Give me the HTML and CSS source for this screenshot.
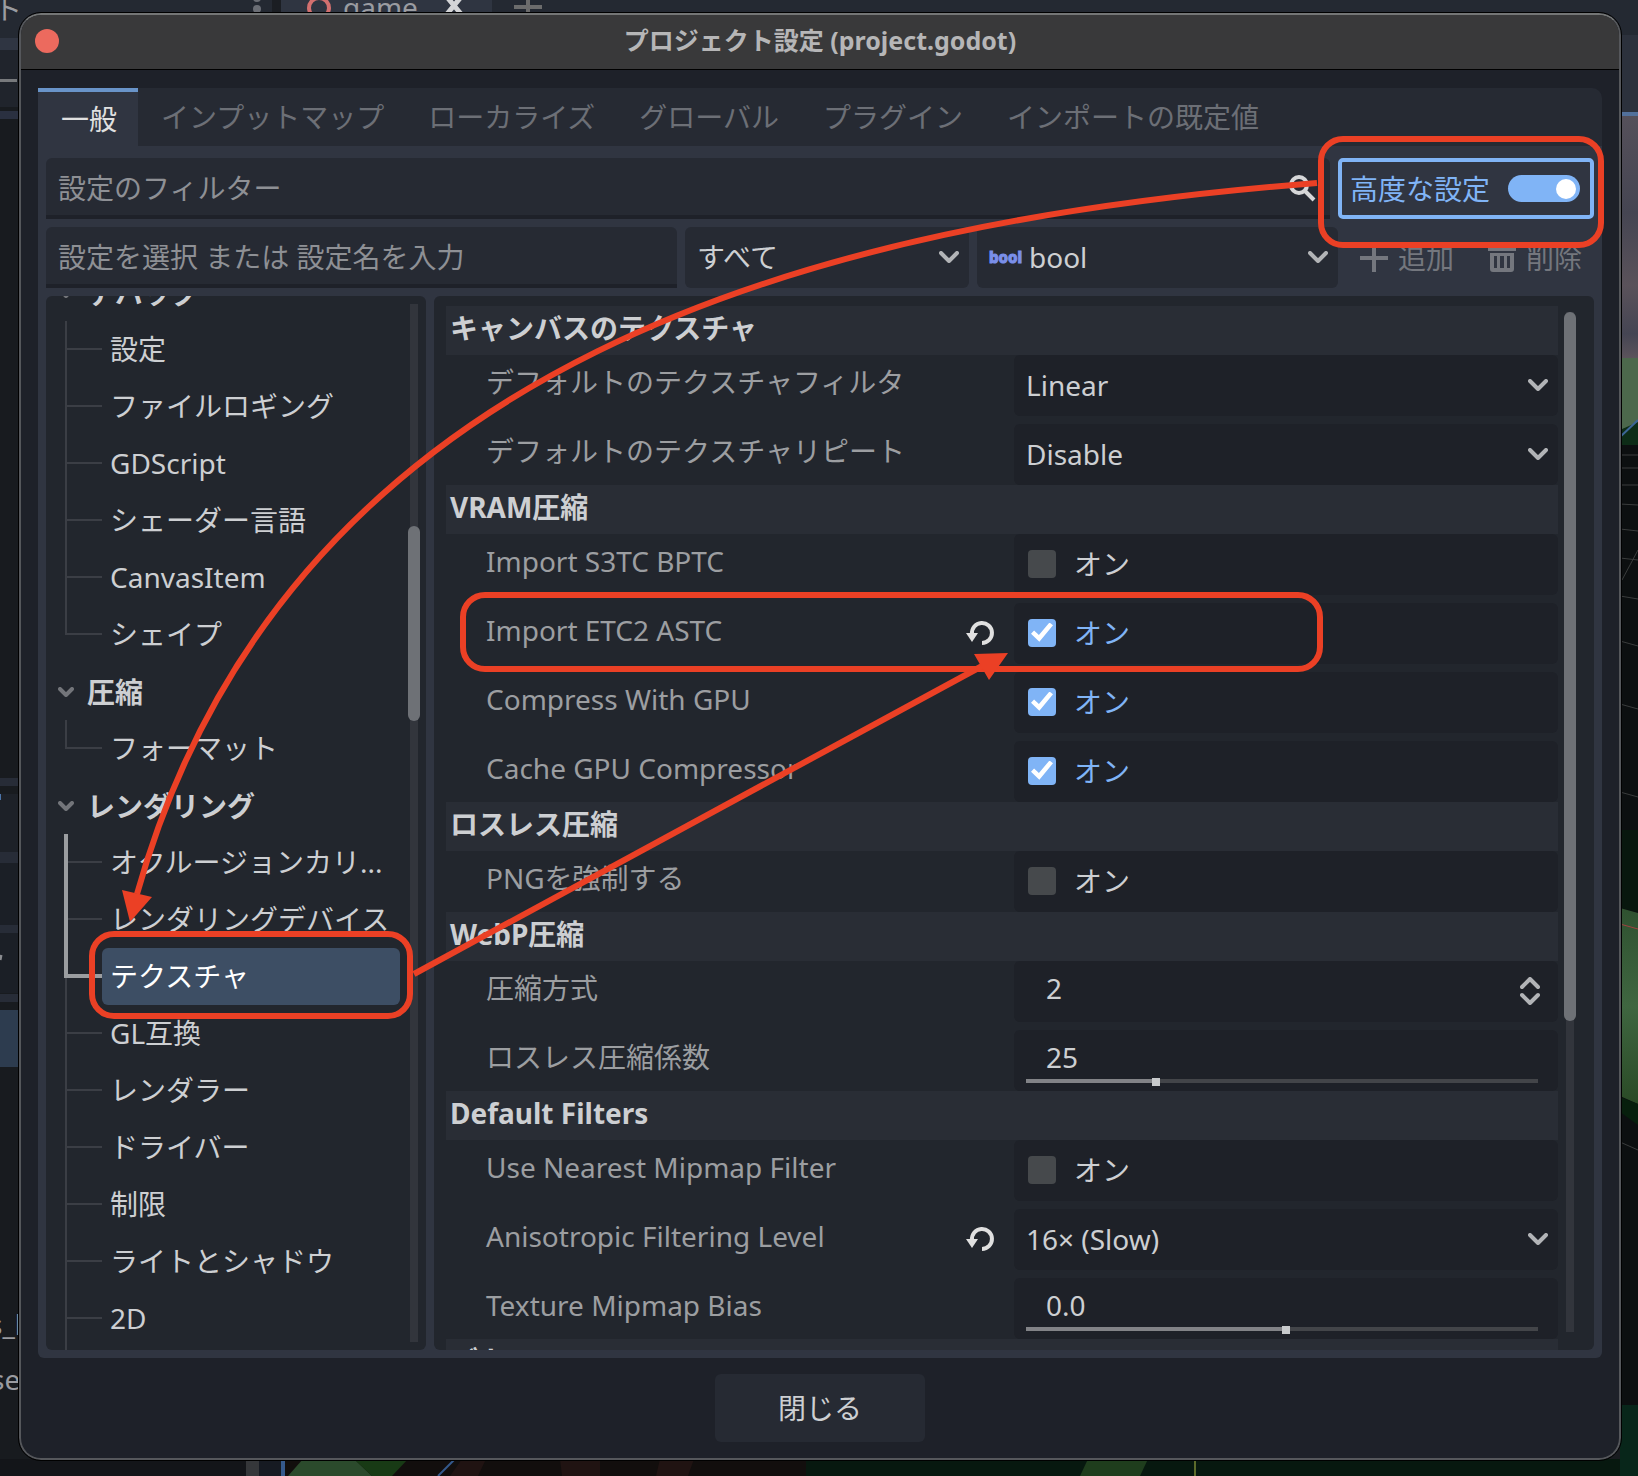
FILE: index.html
```html
<!DOCTYPE html>
<html lang="ja">
<head>
<meta charset="utf-8">
<meta name="viewport" content="width=device-width, initial-scale=1">
<title>プロジェクト設定 (project.godot)</title>
<link rel="stylesheet" href="styles.css">
</head>
<body>
<svg class="editor" viewBox="0 0 1638 1476" preserveAspectRatio="xMinYMin slice" aria-hidden="true">
  <defs>
    <linearGradient id="sky" x1="0" y1="0" x2="0" y2="1">
      <stop offset="0" stop-color="#55505a"/><stop offset=".4" stop-color="#454552"/><stop offset=".7" stop-color="#5a525a"/><stop offset=".9" stop-color="#454553"/><stop offset="1" stop-color="#5b535b"/>
    </linearGradient>
    <linearGradient id="grass" x1="0" y1="0" x2="0" y2="1">
      <stop offset="0" stop-color="#2f5130"/><stop offset=".5" stop-color="#3f6640"/><stop offset="1" stop-color="#2a4a26"/>
    </linearGradient>
  </defs>
  <rect width="1638" height="1476" fill="#181b1f"/>
  <rect width="1638" height="38" fill="#242932"/>
  <rect x="272" width="9" height="14" fill="#1b1e23"/>
  <rect x="281" width="211" height="14" fill="#2f3541"/>
  <text x="-6" y="20" class="ghost">ト</text>
  <circle cx="257" cy="9" r="4" fill="#6b6e75"/><circle cx="257" cy="-2" r="4" fill="#6b6e75"/>
  <circle cx="319" cy="8" r="10" fill="none" stroke="#d3706f" stroke-width="4"/>
  <text x="343" y="18" class="ghost">game</text>
  <path d="M447-3 461 14M461-3 447 14" stroke="#d4d5d7" stroke-width="5"/>
  <path d="M514 7H542M528 0V14" stroke="#6c6c6c" stroke-width="4"/>
  <rect y="38" width="18" height="12" fill="#2f3542"/>
  <rect y="50" width="18" height="57" fill="#20242c"/>
  <rect y="79" width="17" height="3" fill="#77797c"/>
  <rect y="111" width="18" height="8" fill="#2a3040"/>
  <rect y="778" width="18" height="8" fill="#272c37"/>
  <rect y="794" width="18" height="58" fill="#1d2128"/>
  <rect y="794" width="1" height="6" fill="#4b74a8"/>
  <rect y="852" width="18" height="11" fill="#272c37"/>
  <rect y="863" width="18" height="62" fill="#1b1f26"/>
  <rect y="925" width="18" height="8" fill="#272c37"/>
  <rect y="933" width="18" height="60" fill="#1b1f26"/>
  <path d="M0 960 1 955" stroke="#8a8c90" stroke-width="3"/>
  <rect y="994" width="18" height="8" fill="#272c37"/>
  <rect y="1010" width="18" height="57" fill="#2d3c4f"/>
  <text x="-11" y="1335" class="ghost">s_l</text>
  <text x="-9" y="1390" class="ghost">se</text>
  <rect x="1620" y="35" width="18" height="77" fill="#2c313c"/>
  <rect x="1620" y="112" width="18" height="4" fill="#52709b"/>
  <rect x="1620" y="116" width="18" height="242" fill="url(#sky)"/>
  <rect x="1620" y="358" width="18" height="1118" fill="#0c0f10"/>
  <path d="M1620 358H1638V424L1620 430Z" fill="#4c684c"/>
  <path d="M1620 430 1638 422V445H1620Z" fill="#0d2c17"/>
  <path d="M1620 437 1638 420" stroke="#3c6596" stroke-width="2"/>
  <path d="M1620 455H1638M1620 468H1638M1620 485H1638M1620 504 1638 505M1620 529 1638 531M1620 558 1638 560M1620 596 1638 599M1620 641 1638 646M1620 704 1638 709M1620 792 1638 797M1622 580 1638 550M1620 1142 1638 1150" stroke="#3a3c3c"/>
  <path d="M1620 830H1638V912L1620 908Z" fill="#08170e"/>
  <path d="M1620 908 1638 913V1104L1620 1096Z" fill="url(#grass)"/>
  <path d="M1620 924 1638 929" stroke="#a04040"/>
  <path d="M1620 1097 1638 1104V1125L1620 1112Z" fill="#071f0d"/>
  <rect x="1620" y="1405" width="18" height="71" fill="#08261a"/>
  <rect y="1459" width="246" height="17" fill="#131519"/>
  <rect x="246" y="1459" width="13" height="17" fill="#35373a"/>
  <rect x="259" y="1459" width="22" height="17" fill="#161a22"/>
  <rect x="281" y="1459" width="4" height="17" fill="#35598c"/>
  <rect x="285" y="1459" width="530" height="17" fill="#120e0d"/>
  <path d="M303 1459H354L372 1476H288Z" fill="#2b4a2c"/>
  <path d="M354 1459H408L392 1476H372Z" fill="#183a15"/>
  <path d="M455 1459 438 1476" stroke="#35598c" stroke-width="2"/>
  <path d="M462 1459H486L478 1476H450ZM560 1459H600V1476H562ZM660 1459H694L688 1476H656Z" fill="#201312"/>
  <rect x="806" y="1459" width="814" height="17" fill="#07180f"/>
  <path d="M1088 1459H1148L1140 1476H1080Z" fill="#1f3d1d"/>
  <rect x="1194" y="1459" width="2" height="17" fill="#5c6a2a"/>
</svg>

<main class="window">
  <header class="titlebar">
    <button class="close-dot" type="button" aria-label="閉じる"></button>
    <h1>プロジェクト設定 (project.godot)</h1>
  </header>

  <div class="content">
    <nav class="tabs" role="tablist">
      <button class="tab active" type="button" role="tab" aria-selected="true">一般</button>
      <button class="tab" type="button" role="tab">インプットマップ</button>
      <button class="tab" type="button" role="tab">ローカライズ</button>
      <button class="tab" type="button" role="tab">グローバル</button>
      <button class="tab" type="button" role="tab">プラグイン</button>
      <button class="tab" type="button" role="tab">インポートの既定値</button>
    </nav>

    <section class="panel">
      <div class="bar">
        <label class="field search">
          <input type="text" placeholder="設定のフィルター" aria-label="設定のフィルター">
          <svg width="32" height="32" viewBox="0 0 32 32"><circle cx="15" cy="13" r="8" fill="none" stroke="#d6d7d9" stroke-width="4"/><path d="M20 18 30 28" stroke="#d6d7d9" stroke-width="4"/></svg>
        </label>
        <label class="advanced">高度な設定 <input class="switch" type="checkbox" role="switch" checked></label>
      </div>

      <div class="bar">
        <label class="field setting"><input type="text" placeholder="設定を選択 または 設定名を入力" aria-label="設定名"></label>
        <div class="picker feature">
          <select aria-label="機能"><option>すべて</option></select>
          <svg class="chevron" viewBox="0 0 20 12"><path d="M2 2 10 10 18 2"/></svg>
        </div>
        <div class="picker type">
          <svg class="bool-icon" viewBox="0 0 32 20" aria-hidden="true"><text x="0" y="16">bool</text></svg>
          <select aria-label="型"><option>bool</option></select>
          <svg class="chevron" viewBox="0 0 20 12"><path d="M2 2 10 10 18 2"/></svg>
        </div>
        <button class="action" type="button" disabled>
          <svg width="32" height="32" viewBox="0 0 32 32"><path d="M2 16H30M16 2V30" stroke="currentColor" stroke-width="4"/></svg>追加
        </button>
        <button class="action" type="button" disabled>
          <svg width="32" height="32" viewBox="0 0 32 32"><path fill="currentColor" fill-rule="evenodd" d="M10 2H22V5H30V9H2V5H10ZM4 11H28V27Q28 30 25 30H7Q4 30 4 27ZM8 14V26H11V14ZM14 14V26H18V14ZM21 14V26H24V14Z"/></svg>削除
        </button>
      </div>

      <div class="panes">
        <aside class="sidebar">
          <div class="tree">
            <div class="group"><svg class="fold" viewBox="0 0 16 10"><path d="M2 2 8 8 14 2"/></svg>デバッグ</div>
            <ul>
              <li><a href="#">設定</a></li>
              <li><a href="#">ファイルロギング</a></li>
              <li><a href="#">GDScript</a></li>
              <li><a href="#">シェーダー言語</a></li>
              <li><a href="#">CanvasItem</a></li>
              <li><a href="#">シェイプ</a></li>
            </ul>
            <div class="group"><svg class="fold" viewBox="0 0 16 10"><path d="M2 2 8 8 14 2"/></svg>圧縮</div>
            <ul>
              <li><a href="#">フォーマット</a></li>
            </ul>
            <div class="group"><svg class="fold" viewBox="0 0 16 10"><path d="M2 2 8 8 14 2"/></svg>レンダリング</div>
            <ul>
              <li class="path"><a href="#">オクルージョンカリ...</a></li>
              <li class="path"><a href="#">レンダリングデバイス</a></li>
              <li class="selected"><a href="#" aria-current="true">テクスチャ</a></li>
              <li><a href="#">GL互換</a></li>
              <li><a href="#">レンダラー</a></li>
              <li><a href="#">ドライバー</a></li>
              <li><a href="#">制限</a></li>
              <li><a href="#">ライトとシャドウ</a></li>
              <li><a href="#">2D</a></li>
              <li></li>
              <li></li>
            </ul>
          </div>
          <div class="scroll scroll-tree"><span class="thumb"></span></div>
        </aside>

        <div class="inspector">
          <div class="props">
            <h2>キャンバスのテクスチャ</h2>
            <div class="rows">
              <div class="row">
                <label for="filter">デフォルトのテクスチャフィルタ</label>
                <div class="control picker"><select id="filter"><option>Linear</option></select><svg class="chevron" viewBox="0 0 20 12"><path d="M2 2 10 10 18 2"/></svg></div>
              </div>
              <div class="row">
                <label for="repeat">デフォルトのテクスチャリピート</label>
                <div class="control picker"><select id="repeat"><option>Disable</option></select><svg class="chevron" viewBox="0 0 20 12"><path d="M2 2 10 10 18 2"/></svg></div>
              </div>
            </div>

            <h2>VRAM圧縮</h2>
            <div class="rows">
              <div class="row">
                <label class="name" for="s3tc">Import S3TC BPTC</label>
                <label class="control check"><input id="s3tc" type="checkbox"><span>オン</span></label>
              </div>
              <div class="row">
                <div class="name"><label for="etc2">Import ETC2 ASTC</label>
                  <button class="revert" type="button" aria-label="元に戻す"><svg width="32" height="32" viewBox="0 0 32 32"><path d="M8 17A10 10 0 1 1 18 26" fill="none" stroke="#e0e0e0" stroke-width="4"/><path d="M2 16H14L8 25Z" fill="#e0e0e0"/></svg></button>
                </div>
                <label class="control check"><input id="etc2" type="checkbox" checked><span>オン</span></label>
              </div>
              <div class="row">
                <label class="name" for="gpu">Compress With GPU</label>
                <label class="control check"><input id="gpu" type="checkbox" checked><span>オン</span></label>
              </div>
              <div class="row">
                <label class="name" for="cache">Cache GPU Compressor</label>
                <label class="control check"><input id="cache" type="checkbox" checked><span>オン</span></label>
              </div>
            </div>

            <h2>ロスレス圧縮</h2>
            <div class="rows">
              <div class="row">
                <label class="name" for="png">PNGを強制する</label>
                <label class="control check"><input id="png" type="checkbox"><span>オン</span></label>
              </div>
            </div>

            <h2>WebP圧縮</h2>
            <div class="rows">
              <div class="row">
                <label for="method">圧縮方式</label>
                <div class="control spin"><input id="method" type="text" value="2"><svg class="updown" viewBox="0 0 20 28"><path d="M2 10 10 2 18 10M2 18 10 26 18 18"/></svg></div>
              </div>
              <div class="row">
                <label for="factor">ロスレス圧縮係数</label>
                <div class="control slide"><input id="factor" type="text" value="25"><input type="range" min="0" max="100" value="25" style="--fill:25%" aria-label="ロスレス圧縮係数"></div>
              </div>
            </div>

            <h2>Default Filters</h2>
            <div class="rows">
              <div class="row">
                <label class="name" for="mipmap">Use Nearest Mipmap Filter</label>
                <label class="control check"><input id="mipmap" type="checkbox"><span>オン</span></label>
              </div>
              <div class="row">
                <div class="name"><label for="aniso">Anisotropic Filtering Level</label>
                  <button class="revert" type="button" aria-label="元に戻す"><svg width="32" height="32" viewBox="0 0 32 32"><path d="M8 17A10 10 0 1 1 18 26" fill="none" stroke="#e0e0e0" stroke-width="4"/><path d="M2 16H14L8 25Z" fill="#e0e0e0"/></svg></button>
                </div>
                <div class="control picker"><select id="aniso"><option>16× (Slow)</option></select><svg class="chevron" viewBox="0 0 20 12"><path d="M2 2 10 10 18 2"/></svg></div>
              </div>
              <div class="row">
                <label for="bias">Texture Mipmap Bias</label>
                <div class="control slide"><input id="bias" type="text" value="0.0"><input type="range" min="-2" max="2" step="0.01" value="0.03" style="--fill:51%" aria-label="Texture Mipmap Bias"></div>
              </div>
            </div>

            <h2>デカール</h2>
          </div>
          <div class="scroll scroll-props"><span class="thumb"></span></div>
        </div>
      </div>
    </section>

    <footer><button class="close" type="button">閉じる</button></footer>
  </div>
</main>

<svg class="marks" viewBox="0 0 1638 1476" preserveAspectRatio="xMinYMin slice" aria-hidden="true">
  <g fill="none" stroke="#eb4025" stroke-width="6">
    <rect x="1321" y="139" width="280" height="106" rx="22"/>
    <rect x="463" y="595" width="857" height="74" rx="22"/>
    <rect x="92" y="934" width="318" height="82" rx="22"/>
    <path d="M1317 183C820 222 288 356 137 894"/>
    <path d="M414 974 984 665"/>
  </g>
  <path d="M122 890 152 897 130 922ZM1008 653 974 654 989 680Z" fill="#eb4025"/>
</svg>
</body>
</html>
```
FILE: styles.css
```css
* { box-sizing: border-box; }

body {
  margin: 0;
  height: 100vh;
  padding: 13px 17px 16px 19px;
  display: flex;
  overflow: hidden;
  background: #181b1f;
  color: #cdcfd2;
  font: 28px/56px "Noto Sans", "Noto Sans CJK JP", sans-serif;
}

button, input, select {
  margin: 0;
  padding: 0;
  border: 0;
  background: none;
  color: inherit;
  font: inherit;
  appearance: none;
}

h1, h2, ul { margin: 0; padding: 0; list-style: none; }
a { color: inherit; text-decoration: none; }
svg { flex: none; }

.editor, .marks {
  position: absolute;
  inset: 0;
  width: 100%;
  height: 100%;
}
.editor { z-index: -1; }
.marks { pointer-events: none; }
.ghost { fill: #9a9ca1; font-size: 28px; }

/* Window frame */
.window {
  flex: 1;
  min-width: 0;
  display: flex;
  flex-direction: column;
  border: 2px solid #55575b;
  border-top-color: #747676;
  border-radius: 22px;
  outline: 1px solid #000;
  background: #1e2129;
  overflow: hidden;
}
.titlebar {
  display: grid;
  grid-template-columns: 48px 1fr 48px;
  align-items: center;
  height: 55px;
  flex: none;
  padding-bottom: 2px;
  background: #39393a;
  border-bottom: 1px solid #000;
}
.titlebar h1 {
  font-size: 25px;
  line-height: 48px;
  padding-bottom: 2px;
  text-align: center;
  color: #b6b6b7;
}
.close-dot {
  width: 24px;
  height: 24px;
  margin-left: 14px;
  border-radius: 50%;
  background: #ec6a5e;
}

.content {
  flex: 1;
  min-height: 0;
  display: flex;
  flex-direction: column;
  padding: 18px 17px 16px;
}

/* Tabs */
.tabs {
  display: flex;
  flex: none;
  height: 58px;
  background: #262a33;
  border-top-right-radius: 10px;
}
.tab {
  padding: 0 21px 0 23px;
  line-height: 56px;
  color: #6c6f76;
}
.tab.active {
  border-top: 4px solid #6994c9;
  background: #303541;
  color: #e0e0e0;
  line-height: 48px;
}

/* Main panel */
.panel {
  flex: 1;
  min-height: 0;
  display: flex;
  flex-direction: column;
  gap: 8px;
  padding: 12px 8px 8px;
  background: #303541;
  border-radius: 0 0 6px 6px;
}
.bar { display: flex; gap: 8px; height: 61px; flex: none; }
.field {
  display: flex;
  align-items: center;
  padding: 2px 14px 0 12px;
  min-width: 0;
  background: #262a33;
  border-bottom: 4px solid #1e2129;
  border-radius: 6px 6px 0 0;
}
.field input { flex: 1; min-width: 0; height: 55px; outline: 0; }
.field input::placeholder { color: #8e9095; opacity: 1; }
.search { flex: 1; }
.setting { flex: 631 1 631px; }
.feature { flex: 284 1 284px; }
.type { flex: 361 1 361px; }

.advanced {
  display: flex;
  align-items: center;
  gap: 18px;
  width: 256px;
  padding: 0 10px 0 8px;
  border: 4px solid #80b4f6;
  border-radius: 5px;
  color: #80b4f6;
  white-space: nowrap;
}
.switch {
  display: flex;
  align-items: center;
  justify-content: flex-end;
  width: 72px;
  height: 27px;
  padding: 4px;
  border-radius: 14px;
  background: #80b4f6;
}
.switch::before { content: ""; width: 20px; height: 20px; border-radius: 50%; background: #fff; }

.picker {
  display: flex;
  align-items: center;
  gap: 8px;
  padding: 0 10px 2px 12px;
  background: #262a33;
  border-radius: 6px;
}
.picker select { flex: 1; min-width: 0; height: 58px; }
.chevron { width: 20px; height: 12px; }
.chevron path, .updown path, .fold path {
  fill: none;
  stroke: #b2b4b7;
  stroke-width: 4;
  stroke-linecap: round;
  stroke-linejoin: round;
}
.bool-icon { width: 32px; height: 20px; overflow: visible; }
.bool-icon text { font-size: 15px; font-weight: 800; fill: #7a8fea; stroke: #7a8fea; stroke-width: 1; }

.action {
  display: flex;
  align-items: center;
  gap: 8px;
  padding: 0 12px;
  color: #74777e;
}

/* Panes */
.panes {
  flex: 1;
  min-height: 0;
  display: grid;
  grid-template-columns: 380px 1fr;
  gap: 8px;
}
.sidebar, .inspector {
  display: flex;
  overflow: hidden;
  min-width: 0;
  background: #22262d;
  border-radius: 6px;
}
.sidebar { gap: 8px; padding-right: 6px; }
.tree { flex: 1; min-width: 0; margin-top: -32px; }

.group {
  display: flex;
  align-items: center;
  gap: 13px;
  height: 57px;
  padding-left: 12px;
  font-weight: 700;
}
.fold { width: 16px; height: 10px; }
.fold path { stroke: #73757a; }

.tree li {
  height: 57px;
  padding-left: 56px;
  background:
    linear-gradient(#3b3e45, #3b3e45) 19px 0 / 2px 100% no-repeat,
    linear-gradient(#3b3e45, #3b3e45) 19px 27px / 37px 2px no-repeat;
}
.tree li:last-child {
  background:
    linear-gradient(#3b3e45, #3b3e45) 19px 0 / 2px 28px no-repeat,
    linear-gradient(#3b3e45, #3b3e45) 19px 27px / 37px 2px no-repeat;
}
.tree li.path {
  background:
    linear-gradient(#9b9da0, #9b9da0) 18px 0 / 4px 100% no-repeat,
    linear-gradient(#3b3e45, #3b3e45) 22px 27px / 34px 2px no-repeat;
}
.tree li.selected {
  background:
    linear-gradient(#9b9da0, #9b9da0) 18px 0 / 4px 30px no-repeat,
    linear-gradient(#9b9da0, #9b9da0) 18px 26px / 38px 4px no-repeat,
    linear-gradient(#3b3e45, #3b3e45) 19px 0 / 2px 100% no-repeat;
}
.tree a {
  display: block;
  height: 57px;
  padding-left: 8px;
  border-radius: 6px;
  white-space: nowrap;
}
.selected a { background: #3d4e64; color: #fff; }

.scroll { display: grid; flex: none; width: 12px; }
.scroll-tree {
  margin: 8px 0;
  grid-template-rows: 222fr 195fr 621fr;
  background: linear-gradient(#32353c, #32353c) center / 8px 100% no-repeat;
}
.scroll-props {
  margin: 6px 0 18px;
  grid-template-rows: 0 709fr 311fr;
  background: linear-gradient(#32353c, #32353c) center / 8px 100% no-repeat;
}
.thumb { grid-row: 2; border-radius: 6px; background: #6e7176; }

/* Inspector */
.inspector { gap: 6px; padding: 10px 18px 0 12px; }
.props { flex: 1; min-width: 0; }
h2 {
  height: 49px;
  padding-left: 4px;
  font-size: 28px;
  line-height: 45px;
  background: #292d35;
}
.rows { display: grid; gap: 8px; }
.row {
  display: grid;
  grid-template-columns: 568fr 544fr;
  height: 61px;
}
.row > :first-child {
  display: flex;
  justify-content: space-between;
  padding: 0 18px 0 40px;
  line-height: 54px;
  color: #9c9ea1;
  white-space: nowrap;
}
.revert { display: grid; place-items: center; height: 59px; }
.control { background: #1e2128; border-radius: 6px; min-width: 0; }

.check {
  display: flex;
  align-items: center;
  gap: 18px;
  padding: 0 0 2px 14px;
}
.check input {
  display: grid;
  place-items: center;
  width: 28px;
  height: 28px;
  border-radius: 4px;
  background: #46494c;
}
.check input:checked { background: #80b4f6; }
.check input:checked::before {
  content: "";
  width: 22px;
  height: 20px;
  background: #fff;
  clip-path: polygon(0 56%, 14% 40%, 36% 62%, 84% 0, 100% 14%, 38% 96%);
}
.check input:checked + span { color: #80b4f6; }

.spin { display: flex; align-items: center; padding: 0 18px 2px 32px; }
.spin input { flex: 1; min-width: 0; height: 54px; align-self: start; }
.updown { width: 20px; height: 28px; }

.slide { display: flex; flex-direction: column; padding: 0 20px 0 12px; }
.slide input[type="text"] { height: 48px; padding: 6px 0 0 20px; line-height: 42px; }
.slide input[type="range"] {
  width: 100%;
  height: 8px;
  background: linear-gradient(90deg, #828387 var(--fill), #434549 var(--fill)) 0 1px / 100% 4px no-repeat;
}
.slide input[type="range"]::-webkit-slider-thumb {
  appearance: none;
  width: 8px;
  height: 8px;
  background: #c8cacc;
}

footer { display: flex; justify-content: center; flex: none; padding-top: 16px; }
.close {
  width: 210px;
  height: 68px;
  border-radius: 6px;
  background: #262a33;
}
```
